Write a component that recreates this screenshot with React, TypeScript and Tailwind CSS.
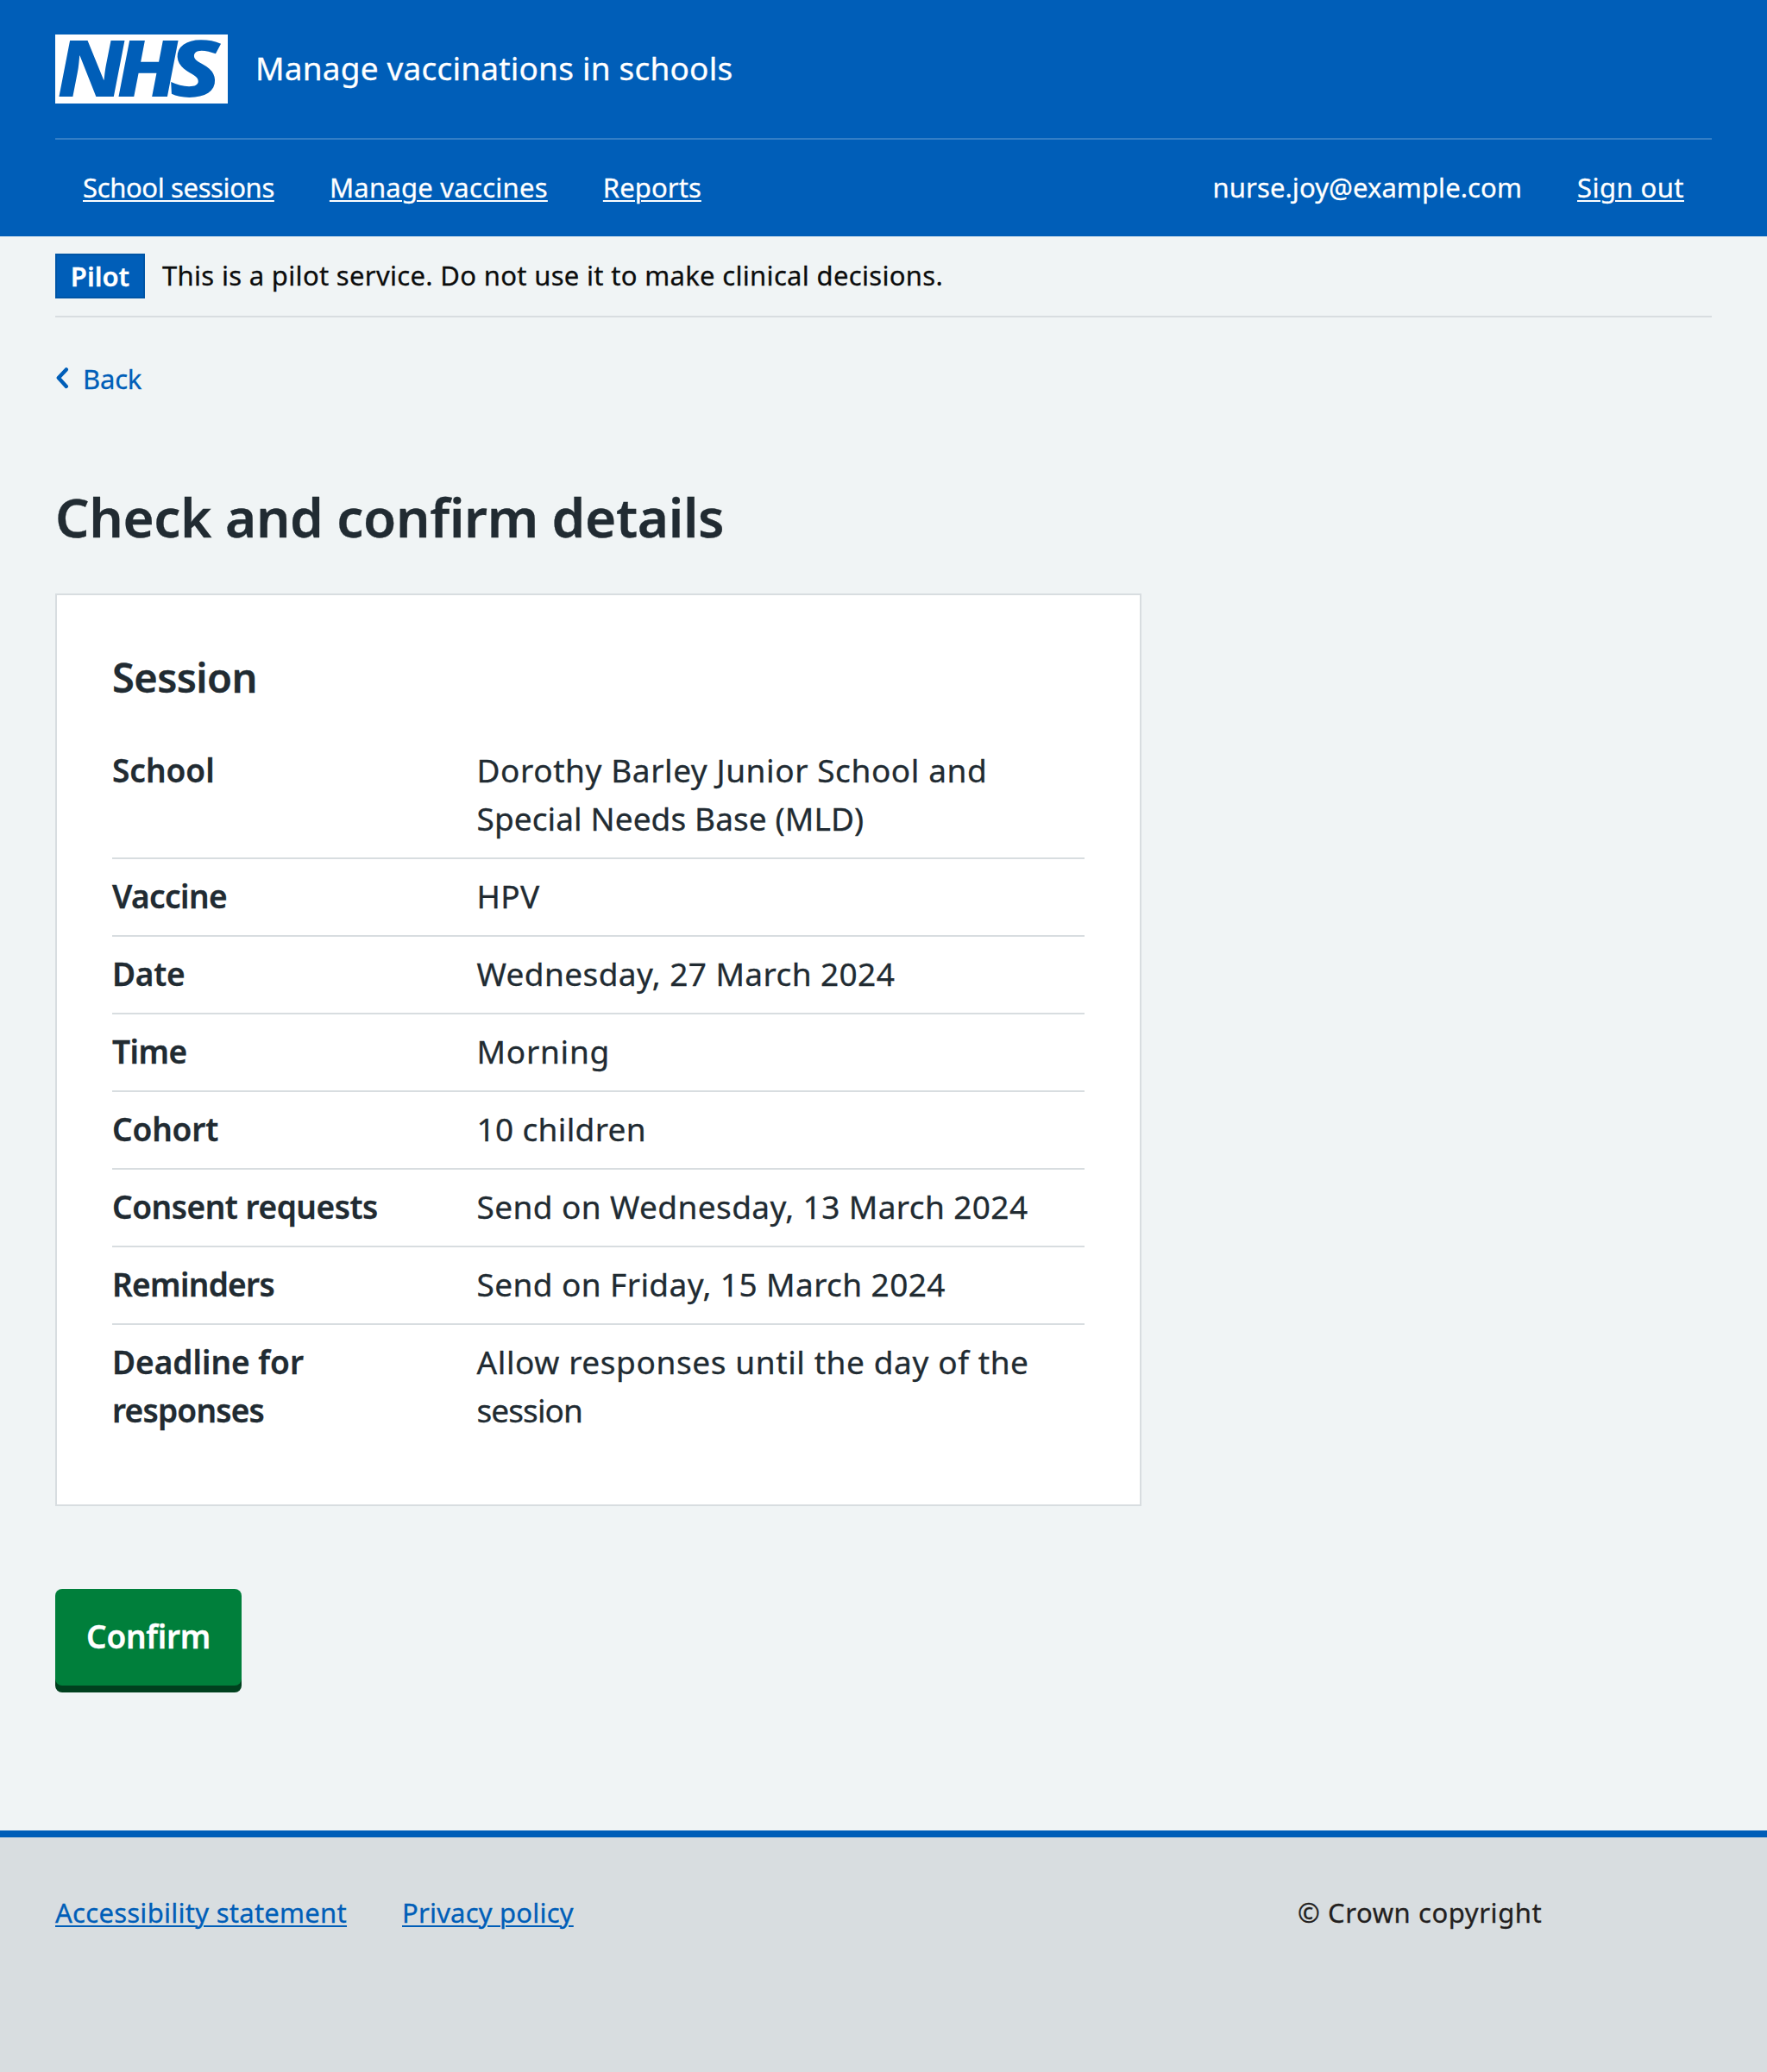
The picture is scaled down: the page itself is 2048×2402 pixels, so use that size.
import type { ReactNode } from "react";

type Line = { text: string; tracking: string };

const rows: { label: Line[]; value: Line[] }[] = [
  {
    label: [{ text: "School", tracking: "tracking-[0px]" }],
    value: [
      { text: "Dorothy Barley Junior School and", tracking: "tracking-[0.58px]" },
      { text: "Special Needs Base (MLD)", tracking: "tracking-[0.1px]" },
    ],
  },
  {
    label: [{ text: "Vaccine", tracking: "tracking-[-0.58px]" }],
    value: [{ text: "HPV", tracking: "tracking-[0.4px]" }],
  },
  {
    label: [{ text: "Date", tracking: "tracking-[-0.27px]" }],
    value: [{ text: "Wednesday, 27 March 2024", tracking: "tracking-[0.41px]" }],
  },
  {
    label: [{ text: "Time", tracking: "tracking-[-0.5px]" }],
    value: [{ text: "Morning", tracking: "tracking-[0.75px]" }],
  },
  {
    label: [{ text: "Cohort", tracking: "tracking-[-0.15px]" }],
    value: [{ text: "10 children", tracking: "tracking-[0.35px]" }],
  },
  {
    label: [{ text: "Consent requests", tracking: "tracking-[-0.45px]" }],
    value: [{ text: "Send on Wednesday, 13 March 2024", tracking: "tracking-[0.4px]" }],
  },
  {
    label: [{ text: "Reminders", tracking: "tracking-[-0.68px]" }],
    value: [{ text: "Send on Friday, 15 March 2024", tracking: "tracking-[0.41px]" }],
  },
  {
    label: [
      { text: "Deadline for", tracking: "tracking-[0px]" },
      { text: "responses", tracking: "tracking-[-0.76px]" },
    ],
    value: [
      { text: "Allow responses until the day of the", tracking: "tracking-[0.6px]" },
      { text: "session", tracking: "tracking-[-0.9px]" },
    ],
  },
];

function Lines({ lines }: { lines: Line[] }) {
  return (
    <>
      {lines.map((line) => (
        <span key={line.text} className={`block whitespace-nowrap ${line.tracking}`}>
          {line.text}
        </span>
      ))}
    </>
  );
}

function TextLink({ className = "", children }: { className?: string; children: ReactNode }) {
  return (
    <a
      href="#"
      className={`whitespace-nowrap underline decoration-2 underline-offset-[3px] ${className}`}
    >
      {children}
    </a>
  );
}

function Logo() {
  return (
    <svg
      className="h-20 w-[200px] shrink-0 overflow-visible bg-white [-webkit-text-stroke:0px]"
      viewBox="0 0 200 80"
      fill="#005eb8"
      fontFamily="'Noto Sans', sans-serif"
      fontSize="91"
      fontStyle="italic"
      fontWeight="800"
      role="img"
      aria-label="NHS"
    >
      <text transform="translate(2.2 72.4) scale(1.15 1) skewX(2.4)">N</text>
      <text transform="translate(71.2 72.4) scale(1.15 1) skewX(2.4)">H</text>
      <text transform="translate(132.8 72.4) scale(1.25 1) skewX(2.4)">S</text>
    </svg>
  );
}

function Header() {
  return (
    <header className="bg-[#005eb8] px-16 text-white">
      <div className="flex h-40 items-center">
        <Logo />
        <span className="ml-8 pb-[3px] text-[37px] leading-[51px] tracking-[0.2px]">
          Manage vaccinations in schools
        </span>
      </div>
      <nav className="flex h-[114px] items-center justify-between border-t-2 border-[#337ec6] px-8 pb-0.5 text-[31px] leading-[42px]">
        <div className="flex gap-16">
          <TextLink className="tracking-[-0.37px]">School sessions</TextLink>
          <TextLink className="tracking-[0.26px]">Manage vaccines</TextLink>
          <TextLink className="tracking-[0.08px]">Reports</TextLink>
        </div>
        <div className="flex gap-16">
          <span className="tracking-[0.08px]">nurse.joy@example.com</span>
          <TextLink className="tracking-[0.45px]">Sign out</TextLink>
        </div>
      </nav>
    </header>
  );
}

function PilotBanner() {
  return (
    <div className="flex h-[94px] items-center border-b-2 border-[#d8dde0]">
      <strong className="flex h-[52px] w-[104px] items-center justify-center border-2 border-[#0055a6] bg-[#005eb8] text-[31px] leading-[42px] font-semibold text-white">
        Pilot
      </strong>
      <span className="ml-5 pb-0.5 text-[31px] leading-[42px] tracking-[0.32px] text-[#0b0c0c]">
        This is a pilot service. Do not use it to make clinical decisions.
      </span>
    </div>
  );
}

function SessionCard() {
  return (
    <section className="mt-[47px] w-[1259px] border-2 border-[#d8dde0] bg-white px-16 pt-[63px] pb-16">
      <h2 className="text-[47px] leading-[64px] font-semibold tracking-[-0.6px]">Session</h2>
      <dl className="mt-[33px] text-[37px] leading-[56px]">
        {rows.map((row) => (
          <div
            key={row.label[0].text}
            className="flex border-b-2 border-[#d8dde0] pt-[15px] pb-[17px] last:border-b-0"
          >
            <dt className="w-[422.5px] shrink-0 font-semibold">
              <Lines lines={row.label} />
            </dt>
            <dd>
              <Lines lines={row.value} />
            </dd>
          </div>
        ))}
      </dl>
    </section>
  );
}

export default function App() {
  return (
    <div className="flex min-h-[2402px] flex-col bg-[#f0f4f5] font-['Noto_Sans',sans-serif] text-[#212b32] [-webkit-text-stroke:0.3px]">
      <Header />
      <div className="px-16">
        <PilotBanner />
        <a
          href="#"
          className="mt-[50px] flex w-fit items-start text-[31px] leading-[42px] text-[#005eb8]"
        >
          <svg
            className="mt-[7px] h-[26px] w-4"
            viewBox="0 0 16 26"
            fill="none"
            stroke="currentColor"
            strokeWidth="4.4"
            strokeLinecap="round"
            strokeLinejoin="round"
          >
            <path d="M12.8 3.4 3.8 13.1l9 9.8" />
          </svg>
          <span className="ml-4 tracking-[-0.2px]">Back</span>
        </a>
        <main>
          <h1 className="mt-[97px] text-[62px] leading-[84px] font-semibold tracking-[-0.35px]">
            Check and confirm details
          </h1>
          <SessionCard />
          <button
            type="button"
            className="mt-24 flex h-28 w-[216px] items-center justify-center rounded-lg bg-[#007f3b] pb-[3px] text-[37px] leading-[51px] font-semibold tracking-[-0.28px] text-white shadow-[0_8px_0_0_#00401e]"
          >
            Confirm
          </button>
        </main>
      </div>
      <footer className="mt-[168px] flex flex-1 items-start justify-between border-t-8 border-[#005eb8] bg-[#d8dde0] px-16 pt-[66px] text-[31px] leading-[42px]">
        <div className="flex gap-16 text-[#005eb8]">
          <TextLink className="tracking-[0.27px]">Accessibility statement</TextLink>
          <TextLink className="tracking-[0.2px]">Privacy policy</TextLink>
        </div>
        <p className="w-[480px] tracking-[0.58px] text-[#231f20]">© Crown copyright</p>
      </footer>
    </div>
  );
}
